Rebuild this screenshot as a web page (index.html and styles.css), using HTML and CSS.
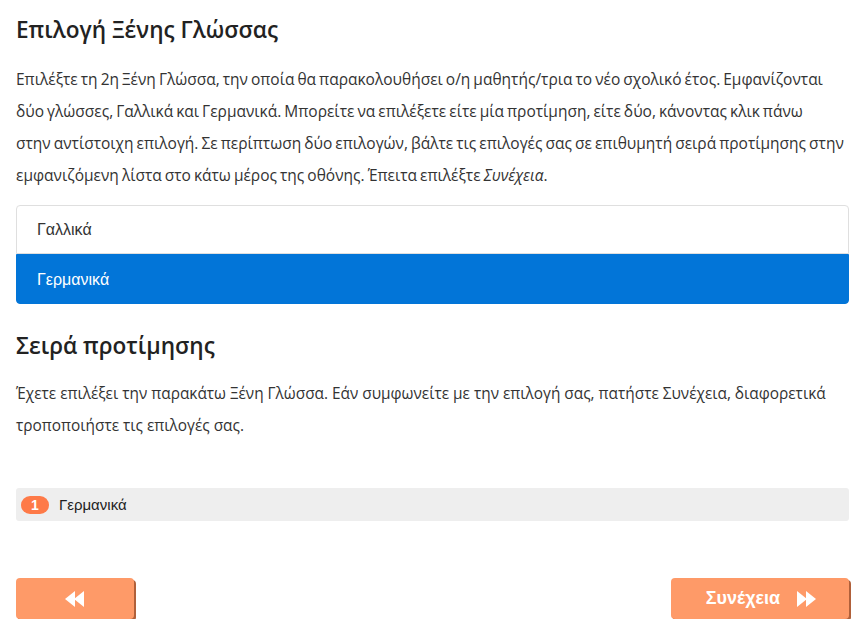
FILE: index.html
```html
<!DOCTYPE html>
<html lang="el">
<head>
<meta charset="utf-8">
<link rel="stylesheet" href="styles.css">
</head>
<body>
<div class="page">
  <h1 class="title">Επιλογή Ξένης Γλώσσας</h1>
  <p class="text">Επιλέξτε τη 2η Ξένη Γλώσσα, την οποία θα παρακολουθήσει ο/η μαθητής/τρια το νέο σχολικό έτος. Εμφανίζονται δύο γλώσσες, Γαλλικά και Γερμανικά. Μπορείτε να επιλέξετε είτε μία προτίμηση, είτε δύο, κάνοντας κλικ πάνω στην&nbsp;αντίστοιχη επιλογή. Σε περίπτωση δύο επιλογών, βάλτε τις επιλογές σας σε επιθυμητή σειρά προτίμησης στην εμφανιζόμενη λίστα στο κάτω μέρος της οθόνης. Έπειτα επιλέξτε <em>Συνέχεια</em>.</p>
  <div class="list">
    <div class="item">Γαλλικά</div>
    <div class="item active">Γερμανικά</div>
  </div>
  <h2 class="subtitle">Σειρά προτίμησης</h2>
  <p class="text text2">Έχετε επιλέξει την παρακάτω Ξένη Γλώσσα. Εάν συμφωνείτε με την επιλογή σας, πατήστε Συνέχεια, διαφορετικά τροποποιήστε τις επιλογές σας.</p>
  <div class="chosen">
    <span class="badge">1</span>
    <span class="chosen-name">Γερμανικά</span>
  </div>
  <div class="nav">
    <button class="btn btn-back" type="button">
      <svg width="20" height="16" viewBox="0 0 20 16"><path d="M10 0 L0 8 L10 16 Z M19 0 L9 8 L19 16 Z" fill="#fff"/></svg>
    </button>
    <button class="btn btn-next" type="button">
      <span>Συνέχεια</span>
      <svg width="20" height="16" viewBox="0 0 20 16"><path d="M1 0 L11 8 L1 16 Z M10 0 L20 8 L10 16 Z" fill="#fff"/></svg>
    </button>
  </div>
</div>
</body>
</html>
```
FILE: styles.css
```css
html, body {
  margin: 0;
  padding: 0;
  background: #fff;
}
body {
  font-family: "Open Sans", "Noto Sans", sans-serif;
  color: #212529;
}
.page {
  padding: 0 6px 0 16px;
}
.title {
  margin: 0;
  padding-top: 14px;
  font-size: 22.6px;
  font-weight: 600;
  line-height: 32px;
  color: #222;
}
.text {
  margin: 17px 0 0 0;
  font-size: 15.5px;
  line-height: 32px;
  word-spacing: -1px;
  color: #333;
}
.text2 {
  margin-top: 16px;
  font-size: 15.4px;
  word-spacing: 0;
}
.list {
  margin-top: 14px;
}
.item {
  height: 49px;
  line-height: 48px;
  padding: 0 20px;
  font-family: "Liberation Sans", Arial, sans-serif;
  font-size: 16px;
  color: #333;
  border: 1px solid #dfdfdf;
  border-radius: 4px 4px 0 0;
  box-sizing: border-box;
}
.item.active {
  height: 50px;
  line-height: 50px;
  background: #0275d8;
  border-color: #0275d8;
  color: #fff;
  border-radius: 0 0 4px 4px;
}
.subtitle {
  margin: 26px 0 0 0;
  font-size: 22.6px;
  font-weight: 600;
  line-height: 32px;
  color: #222;
}
.chosen {
  margin-top: 46px;
  height: 33px;
  background: #eee;
  border-radius: 3px;
  display: flex;
  align-items: center;
  padding-left: 5px;
  gap: 10px;
}
.badge {
  display: inline-block;
  width: 28px;
  height: 18px;
  line-height: 18px;
  border-radius: 9px;
  background: #fe7a48;
  color: #fff;
  font-family: "Liberation Sans", Arial, sans-serif;
  font-weight: bold;
  font-size: 14px;
  text-align: center;
}
.chosen-name {
  font-family: "Liberation Sans", Arial, sans-serif;
  font-size: 15px;
  color: #222;
}
.nav {
  margin-top: 57px;
  display: flex;
  justify-content: space-between;
}
.btn {
  height: 41px;
  border: none;
  border-radius: 4px;
  background: #fe9a68;
  box-shadow: 2px 2px 0 #b0603a;
  color: #fff;
  font-family: "Liberation Sans", Arial, sans-serif;
  font-weight: bold;
  font-size: 18px;
  display: flex;
  align-items: center;
  justify-content: center;
  gap: 16px;
  padding: 0;
  cursor: pointer;
}
.btn-back {
  width: 118px;
}
.btn-next {
  width: 178px;
  padding-left: 2px;
}
```
